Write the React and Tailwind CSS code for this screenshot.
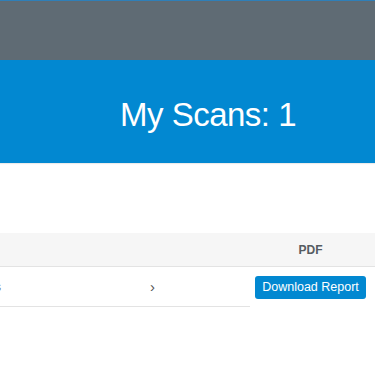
import React from 'react';

const App = () => {
  return (
    <div className="w-[375px] h-[366px] overflow-hidden bg-white font-['Liberation_Sans',Arial,sans-serif]">
      {/* top bar */}
      <div className="h-[60px] bg-[#5f6b74] border-t border-[#2f7fb8]" />

      {/* hero */}
      <div className="h-[103px] bg-[#0288d1] flex items-center pl-[120px] pt-[6px] shadow-[0_1px_1px_rgba(0,0,0,0.08)]">
        <h1 className="text-[33px] font-light text-white tracking-[-0.5px] leading-none">My Scans: 1</h1>
      </div>

      {/* table */}
      <div className="mt-[70px]">
        <div className="flex h-[34px] bg-[#f6f6f6] border-b border-[#e3e3e3] items-center">
          <div className="w-[250px]" />
          <div className="w-[120px] text-center text-[12px] font-bold text-[#555c61] pl-[1px]">PDF</div>
        </div>
        <div className="flex h-[40px]">
          <div className="w-[250px] border-b border-[#e3e3e3] flex items-center overflow-hidden">
            <span className="text-[12px] text-[#6b7278] -ml-[5px] w-[155px] shrink-0">s</span>
            <span className="text-[15px] text-[#555] leading-none">&#8250;</span>
          </div>
          <div className="w-[120px] flex items-center justify-center pl-[1px]">
            <button className="h-[23px] px-[7px] rounded-[3px] bg-[#0288d1] text-white text-[12.5px] leading-none">
              Download Report
            </button>
          </div>
        </div>
      </div>
    </div>
  );
};

export default App;
